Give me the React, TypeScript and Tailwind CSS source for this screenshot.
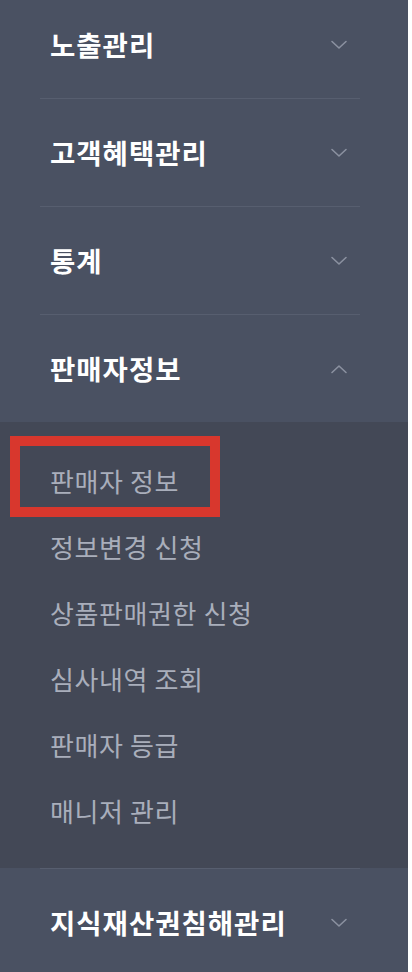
import { ReactNode } from "react";

type Group = {
  title: string;
  open?: boolean;
  children?: string[];
};

const GROUPS: Group[] = [
  { title: "노출관리" },
  { title: "고객혜택관리" },
  { title: "통계" },
  {
    title: "판매자정보",
    open: true,
    children: [
      "판매자 정보",
      "정보변경 신청",
      "상품판매권한 신청",
      "심사내역 조회",
      "판매자 등급",
      "매니저 관리",
    ],
  },
  { title: "지식재산권침해관리" },
];

function Chevron({ up }: { up?: boolean }) {
  return (
    <svg width="18" height="10" viewBox="0 0 18 10" fill="none" className="text-[#8b91a0]">
      <path
        d={up ? "M2 8.5 L9 2 L16 8.5" : "M2 1.5 L9 8 L16 1.5"}
        stroke="currentColor"
        strokeWidth="1.6"
        strokeLinecap="round"
        strokeLinejoin="round"
      />
    </svg>
  );
}

function Divider() {
  return (
    <div className="bg-[#4a5162] pl-10 pr-12">
      <div className="h-px bg-[#575e6f]" />
    </div>
  );
}

function SubItem({ label, marked }: { label: string; marked?: boolean }): ReactNode {
  return (
    <div className="relative flex h-[66px] items-center pl-[50px] text-[26px] tracking-[0.6px] text-[#a9aebb]">
      {marked && (
        <div className="absolute left-[10px] top-[-11px] h-[81px] w-[210px] border-[10px] border-[#d8372d]" />
      )}
      <span className="relative">{label}</span>
    </div>
  );
}

export default function App() {
  return (
    <div className="h-[972px] w-[412px] overflow-hidden bg-white">
      <nav
        className="-mt-[9px] w-[408px] bg-[#4a5162]"
        style={{ fontFamily: '"Noto Sans CJK KR", "Noto Sans", sans-serif' }}
      >
        {GROUPS.map((g, i) => (
          <div key={g.title}>
            {i > 0 && <Divider />}
            <div className="flex h-[107px] items-center justify-between pl-[50px] pr-[60px]">
              <span className="text-[27.5px] font-bold tracking-[1px] text-white">{g.title}</span>
              <Chevron up={g.open} />
            </div>
            {g.open && g.children && (
              <div className="bg-[#434856] py-[25px]">
                {g.children.map((c, j) => (
                  <SubItem key={c} label={c} marked={j === 0} />
                ))}
              </div>
            )}
          </div>
        ))}
      </nav>
    </div>
  );
}
